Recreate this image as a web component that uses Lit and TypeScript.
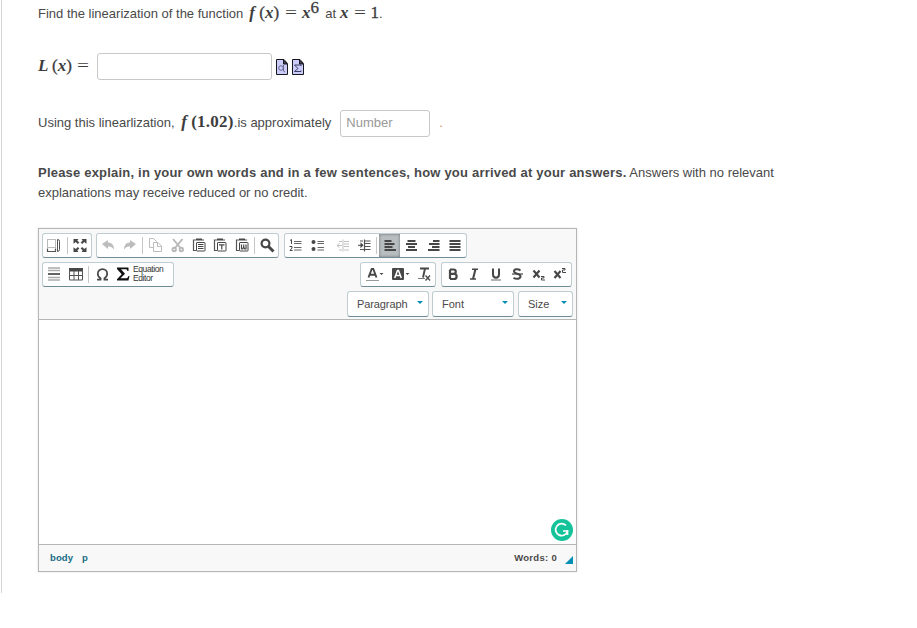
import { LitElement, html, css, svg } from "lit";
import { customElement, property } from "lit/decorators.js";

const doc = svg`<path d="M8 6H5.500V16.500H8M15.500 6.500V6H14" fill="none" stroke="#555" stroke-width="1.200"/><path d="M8 4.500h6v2H8z" fill="#474747"/><rect x="8.500" y="8.500" width="8.500" height="8.500" rx=".5" fill="#fff" stroke="#474747"/>`;

const icons: Record<string, unknown> = {
  blocks: svg`<path d="M4.500 5.500h8v8h-8z" fill="none" stroke="#777" stroke-dasharray="1 1"/><path d="M4.500 14.500v3h8v-3" fill="none" stroke="#555" stroke-width="1.200"/><path d="M14.500 5.500h.5q1.500 0 1.500 2v8q0 2-2 2z" fill="none" stroke="#555"/>`,
  maximize: svg`<g fill="#474747"><path d="M4.500 5h5L8.300 6.400l2 2-1.500 1.500-2-2L4.500 9.800z"/><path d="M17.500 5h-5l1.200 1.400-2 2 1.500 1.500 2-2L17.500 9.800z"/><path d="M4.500 18h5l-1.200-1.400 2-2-1.500-1.500-2 2L4.500 13.200z"/><path d="M17.500 18h-5l1.200-1.400-2-2 1.500-1.500 2 2L17.500 13.200z"/></g>`,
  undo: svg`<path d="M5 10l6-4v2.500c4 0 6 3 6 7-2-2.700-3.500-3-6-3V15z" fill="#bcbcbc"/>`,
  redo: svg`<path d="M17 10l-6-4v2.500c-4 0-6 3-6 7 2-2.700 3.500-3 6-3V15z" fill="#bcbcbc"/>`,
  copy: svg`<g fill="#fff" stroke="#bcbcbc"><path d="M5.500 4.500h4l3 3v6h-7z"/><path d="M9.500 8.500h4.500l3.500 3.500v5.500h-8zM13.500 9v3.500h4"/></g>`,
  cut: svg`<g fill="none" stroke="#b8b8b8" stroke-width="1.900"><path d="M7 5l7.500 9M16.500 5L9 14"/><circle cx="8.200" cy="15.500" r="1.700"/><circle cx="15.300" cy="15.500" r="1.700"/></g>`,
  paste: svg`${doc}<path d="M10 10.500h5.500M10 12.500h5.500M10 14.500h5.500" stroke="#474747"/>`,
  pasteText: svg`${doc}<path d="M10 10.800h5.500M12.800 10.500v5" stroke="#474747" stroke-width="1.200"/>`,
  pasteWord: svg`${doc}<path d="M10.500 10.500v4.500h1.200l1-2 1 2h1.300v-4.500M12.700 10.500v3" fill="none" stroke="#474747" stroke-width="1.200"/>`,
  find: svg`<circle cx="9.500" cy="9.500" r="3.900" fill="none" stroke="#474747" stroke-width="2.200"/><path d="M12.500 12.500l5 5" stroke="#474747" stroke-width="3"/>`,
  numbered: svg`<path d="M9 7.500h7.500M9 9.500h7.500M9 13.500h7.500M9 16h7.500" stroke="#666"/><path d="M5 6.500l1.500-1v4.500M4.500 12.500h2.500v1.500l-2 2.500h2.500" fill="none" stroke="#474747"/>`,
  bulleted: svg`<g fill="#474747"><circle cx="6.500" cy="8" r="2"/><circle cx="6.500" cy="15" r="2"/></g><path d="M10.500 7.500h6.500M10.500 9.500h6.500M10.500 13.500h6.500M10.500 16h6.500" stroke="#666"/>`,
  outdent: svg`<path d="M10 7.500h3M15 7.500h5M15 10h5M15 12.500h5M15 16h5M10 16h3M14 5.500v12" stroke="#c1c1c1"/><path d="M8 11.500h5M10.500 9.300L8 11.500l2.500 2.200" fill="none" stroke="#c1c1c1"/>`,
  indent: svg`<path d="M9 7h3M14 7h5.500M14 9.500h5.500M14 12.500h5.500M9 15.500h10.500M13.500 5.500v12" stroke="#555" stroke-width="1.200"/><path d="M7 11.300h5" stroke="#474747"/><path d="M9.500 8.300l3 3-3 3z" fill="#474747"/>`,
  left: svg`<path d="M5.500 7h7M5.500 10h10M5.500 13h8M5.500 16h11.500" stroke="#474747" stroke-width="1.800"/>`,
  center: svg`<path d="M7.500 7h8M6 10h11M8 13h7M6 16h11" stroke="#474747" stroke-width="1.800"/>`,
  right: svg`<path d="M11 7h6.500M7 10h10.500M10 13h7.500M6 16h11.500" stroke="#474747" stroke-width="1.800"/>`,
  justify: svg`<path d="M5.500 7h11M5.500 10h11M5.500 13h11M5.500 16h11" stroke="#474747" stroke-width="1.800"/>`,
  rule: svg`<path d="M5 5h12M5 7.500h12M5 14.500h12M5 17h12" stroke="#aaa" stroke-width="1.300"/><path d="M5 11h12" stroke="#474747" stroke-width="1.700"/>`,
  table: svg`<path d="M4 5h14v3.500H4z" fill="#474747"/><path d="M4.500 6v11h13V6M4 12.500h14M9 8v9M13.500 8v9" fill="none" stroke="#555"/>`,
  omega: svg`<path d="M7 16.700h3.600v-1.500C8.500 14 7.800 12.500 7.800 10.800c0-2.700 2-4.700 4.700-4.700s4.700 2 4.700 4.700c0 1.700-.7 3.200-2.800 4.400v1.500H18" fill="none" stroke="#474747" stroke-width="1.700"/>`,
  sigma: svg`<path d="M5 4.500h11.500v3.500h-1c-.3-1.400-1-1.800-2.500-1.800H9l4 4.500-4.500 4.600h5.200c1.500 0 2.200-.7 2.800-2.300h1l-1 4.500H5v-1.300l4.700-5-4.700-5.200z" fill="#111"/>`,
  color: svg`<path d="M7.500 14.500l3.200-8.500h1.600l3.200 8.500M9 11.700h5" fill="none" stroke="#474747" stroke-width="1.900"/><path d="M5 17.500h13" stroke="#999"/><path d="M18.500 10h4l-2 2z" fill="#474747"/>`,
  highlight: svg`<rect x="5" y="5" width="12" height="12" rx="1" fill="#474747"/><path d="M7.700 15L10.500 7.500h1L14.300 15M9 12.500h4" fill="none" stroke="#fff" stroke-width="1.500"/><path d="M18.500 10h4l-2 2z" fill="#474747"/>`,
  clear: svg`<path d="M7 5.500h9M12 5.500l-2 9" fill="none" stroke="#474747" stroke-width="1.900"/><path d="M5 15.500h7" stroke="#777"/><path d="M12.500 12.500l4.500 5M17 12.500l-4.500 5" stroke="#474747" stroke-width="1.300"/>`,
  bold: svg`<path d="M8 6.500v9.500M8 6.500h3.500c3 0 3 4.400 0 4.400H8h4c3.500 0 3.500 5.100 0 5.100H8" fill="none" stroke="#474747" stroke-width="2.200"/>`,
  italic: svg`<path d="M8 6.300h6M6 16h6" stroke="#474747" stroke-width="1.400"/><path d="M11.500 6l-2.500 10" stroke="#474747" stroke-width="2"/>`,
  underline: svg`<path d="M8 5.500v6c0 4.200 6 4.200 6 0v-6" fill="none" stroke="#474747" stroke-width="2"/><path d="M6 17h10" stroke="#666"/>`,
  strike: svg`<path d="M13.500 7.500C11 5.500 7 6 7 8.300c0 3 6.500 1.800 6.500 5 0 2.600-4 3.200-7 1.500" fill="none" stroke="#474747" stroke-width="2"/><path d="M5 11h11" stroke="#474747" stroke-width="1.200"/>`,
  sub: svg`<path d="M5.500 7.500l6 7M11.500 7.500l-6 7" stroke="#474747" stroke-width="2.100"/><path d="M13 13.500h3v1.500h-2.500V17h3.500" fill="none" stroke="#474747"/>`,
  sup: svg`<path d="M4.500 8l6 7M10.500 8l-6 7" stroke="#474747" stroke-width="2.100"/><path d="M12 5.500h3V7h-2.500v2.500h3.500" fill="none" stroke="#474747"/>`,
};

@customElement("tool-group")
class ToolGroup extends LitElement {
  @property() items = "";
  @property() active = "";
  static styles = css`
    :host { display: flex; box-sizing: border-box; height: 25px; border: 1px solid #bfcdd2; border-bottom-color: #718c99; border-radius: 3px; background: #fff; }
    .tool { width: 22px; flex: 0 1 22px; min-width: 0; height: 23px; }
    .tool svg { display: block; width: 22px; height: 22px; overflow: visible; }
    .active { background: #b8bdbf; box-shadow: inset 0 0 3px #687078; }
    .sep { width: 1px; height: 17px; margin: var(--sep-margin, 3px 1px); background: #c6c6c6; flex: none; }
  `;
  render() {
    return html`${this.items.split(" ").map((n) =>
      n === "|"
        ? html`<span class="sep"></span>`
        : html`<span class="tool ${n === this.active ? "active" : ""}"><svg viewBox="0 0 22 22">${icons[n]}</svg></span>`
    )}<slot></slot>`;
  }
}

@customElement("app-root")
class AppRoot extends LitElement {
  static styles = css`
    :host { display: block; height: 628px; overflow: hidden; background: #fff; color: #494949; font: 13px/20px "Liberation Sans", Arial, sans-serif; }
    * { box-sizing: border-box; }
    .page { margin-left: 1px; border-left: 1px solid #d5d5d5; height: 593px; padding-left: 36px; }
    .line { display: flex; align-items: center; white-space: pre; }
    .first { height: 28px; }
    .second { height: 78px; }
    .third { height: 34px; }
    .math { display: flex; align-items: baseline; font: 17px/20px "Liberation Serif", "Times New Roman", serif; color: #3d3d3d; -webkit-text-stroke: .3px #3d3d3d; height: 22px; }
    .math i { font-weight: bold; -webkit-text-stroke: 0; }
    .eqs { width: 12px; margin: 0 5px; text-align: center; transform: scaleX(1.25); -webkit-text-stroke: 0; }
    .f { width: 10px; }
    .fx { margin-left: 6px; width: 76px; }
    .fx .eqs { margin-left: 6px; }
    .six { font-size: 17px; line-height: 12px; align-self: flex-start; margin-top: -1px; }
    .at { margin: 0 4px 0 0; }
    .lx { width: 59px; }
    .l { width: 14px; }
    .dec { margin-left: 3px; font-weight: bold; -webkit-text-stroke: 0; letter-spacing: .25px; }
    .box { height: 27px; border: 1px solid #c8c8c8; border-radius: 3px; background: #fff; }
    .answer { width: 175px; margin-top: -1px; }
    .number { width: 90px; color: #999; padding: 2px 5px; margin-left: 9px; }
    .dot { margin-left: 9px; }
    .orange { color: #d98b50; }
    .file { width: 12px; height: 16px; margin-left: 4px; }
    .explain { margin-top: 23px; width: 780px; }
    .explain b { letter-spacing: .205px; }
    .editor { width: 539px; height: 344px; margin-top: 25px; border: 1px solid #b6b6b6; display: flex; flex-direction: column; box-shadow: 0 0 2px #ddd; }
    .toolbar { height: 91px; background: #f8f8f8; border-bottom: 1px solid #b6b6b6; padding: 4px 3px 0; display: flex; flex-direction: column; gap: 4px; }
    .row { display: flex; height: 25px; }
    .g1 { width: 50px; --sep-margin: 3px 1px 3px 2px; }
    .g2 { width: 183px; margin-left: 4px; }
    .g3 { width: 183px; margin-left: 5px; --sep-margin: 3px 2px 3px 3px; }
    .g4 { width: 132px; }
    .g5 { width: 76px; margin-left: 186px; gap: 4px; }
    .g6 { width: 131px; margin-left: 5px; }
    .eq { font-size: 8.500px; line-height: 9px; padding-top: 2px; color: #333; margin-left: -1px; white-space: nowrap; letter-spacing: -.4px; }
    .combo { height: 26px; border: 1px solid #bfcdd2; border-bottom-color: #718c99; border-radius: 3px; background: #fff; font-size: 11px; line-height: 25px; padding-left: 9px; display: flex; justify-content: space-between; }
    .combo::after { content: ""; border: 3px solid transparent; border-top-color: #078eb4; border-bottom: 0; margin: 9px 5px 0 0; height: 3px; }
    .paragraph { width: 82px; margin-left: 305px; letter-spacing: -.1px; }
    .font { width: 82px; margin-left: 3px; }
    .size { width: 55px; margin-left: 4px; }
    .canvas { flex: 1; display: flex; justify-content: flex-end; align-items: flex-end; padding: 0 3px 3px 0; }
    .canvas svg { width: 22px; height: 22px; }
    .status { height: 27px; border-top: 1px solid #b6b6b6; background: #f8f8f8; display: flex; padding: 0 3px 0 11px; line-height: 26px; font-size: 9.500px; font-weight: bold; }
    .path { color: #176b85; margin-right: 9px; letter-spacing: .1px; }
    .words { margin-left: auto; letter-spacing: .3px; }
    .grip { width: 8px; height: 8px; background: #078eb4; clip-path: polygon(100% 0, 100% 100%, 0 100%); margin: 11px 0 0 8px; }
  `;
  render() {
    return html`<div class="page">
      <div class="line first"><span>Find the linearization of the function</span><span class="math fx"><i class="f">f</i><span>(<i>x</i>)</span><span class="eqs">=</span><i>x</i><span class="six">6</span></span><span class="at">at</span><span class="math"><i>x</i><span class="eqs">=</span>1</span>.</div>
      <div class="line second"><span class="math lx"><i class="l">L</i><span>(<i>x</i>)</span><span class="eqs">=</span></span><span class="box answer"></span>
        ${["search", "sum"].map((k) => html`<svg class="file" viewBox="0 0 12 16"><path d="M.5.5H8l3.500 4v11H.5z" fill="#ccccfb" stroke="#16161e"/><path d="M7.500 1v4H11z" fill="#42425c" stroke="#16161e"/>${k === "search" ? svg`<circle cx="5" cy="9" r="2.300" fill="none" stroke="#66668c"/><path d="M7.500 6v6l1.500 1" fill="none" stroke="#66668c"/>` : svg`<path d="M9 7V6H2.500L6 9.500 2.500 12.500H9v-1" fill="none" stroke="#3c3c66"/>`}</svg>`)}
      </div>
      <div class="line third"><span>Using this linearlization, </span><span class="math dec"><i class="f">f</i>(1.02)</span><span>.is approximately</span><span class="box number">Number</span><span class="dot orange">.</span></div>
      <div class="explain"><b>Please explain, in your own words and in a few sentences, how you arrived at your answers.</b> Answers with no relevant<br />explanations may receive reduced or no credit.</div>
      <div class="editor">
        <div class="toolbar">
          <div class="row"><tool-group class="g1" items="blocks | maximize"></tool-group><tool-group class="g2" items="undo redo | copy cut paste pasteText pasteWord | find"></tool-group><tool-group class="g3" active="left" items="numbered bulleted outdent indent | left center right justify"></tool-group></div>
          <div class="row"><tool-group class="g4" items="rule table | omega sigma"><span class="eq">Equation<br />Editor</span></tool-group><tool-group class="g5" items="color highlight clear"></tool-group><tool-group class="g6" items="bold italic underline strike sub sup"></tool-group></div>
          <div class="row"><span class="combo paragraph">Paragraph</span><span class="combo font">Font</span><span class="combo size">Size</span></div>
        </div>
        <div class="canvas"><svg viewBox="0 0 22 22"><circle cx="11" cy="11" r="11" fill="#15c39a"/><path d="M15 6.500A6 6 0 1 0 16.500 12H12M16.500 11v5" fill="none" stroke="#fff" stroke-width="1.700"/></svg></div>
        <div class="status"><span class="path">body</span><span class="path">p</span><span class="words">Words: 0</span><span class="grip"></span></div>
      </div>
    </div>`;
  }
}
